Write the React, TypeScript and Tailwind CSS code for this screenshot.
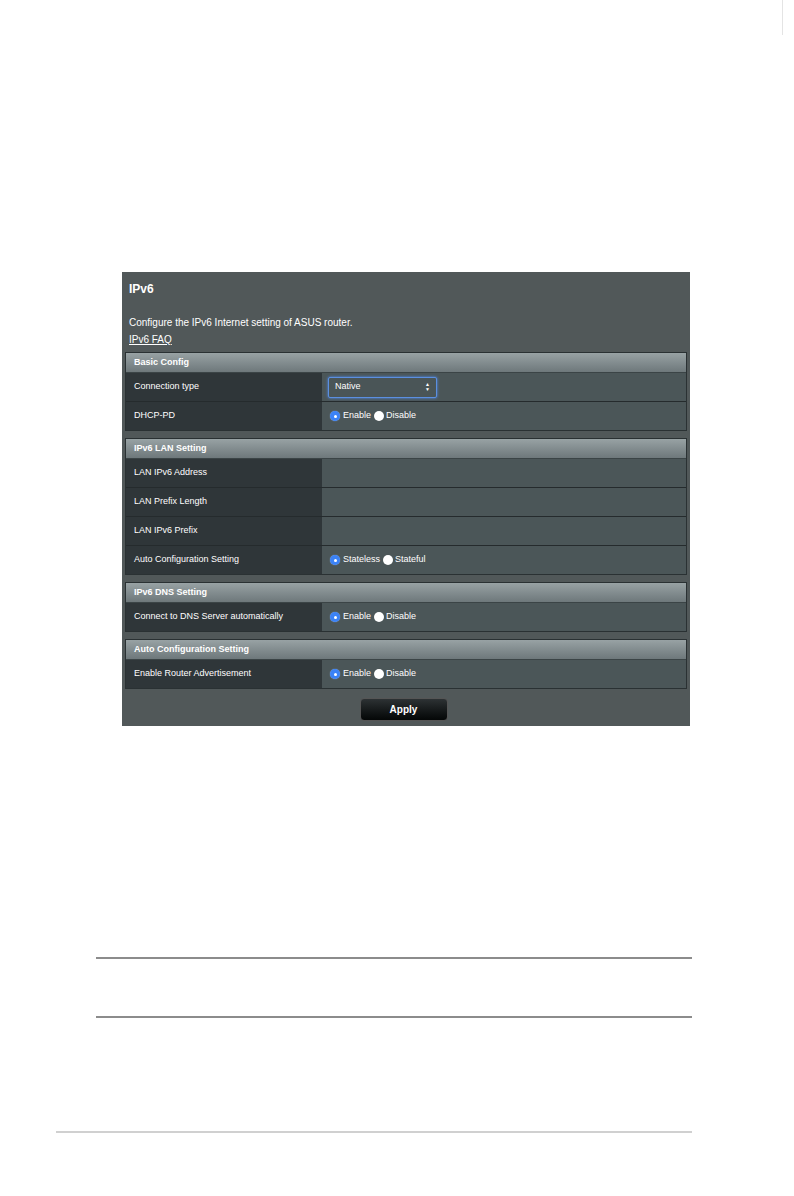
import React from "react";

type Row = { label: string; value?: React.ReactNode };

function Radio({ checked }: { checked: boolean }) {
  return checked ? (
    <span className="inline-flex h-[10px] w-[10px] items-center justify-center rounded-full bg-[#3b82f6] shadow-[0_0_1px_#9cc3ff]">
      <span className="h-[3px] w-[3px] rounded-full bg-white" />
    </span>
  ) : (
    <span className="inline-block h-[10px] w-[10px] rounded-full bg-white" />
  );
}

function RadioPair({ a, b }: { a: string; b: string }) {
  return (
    <div className="flex items-center">
      <Radio checked />
      <span className="ml-[3px] mr-[3px]">{a}</span>
      <Radio checked={false} />
      <span className="ml-[2px]">{b}</span>
    </div>
  );
}

function Section({ title, rows }: { title: string; rows: Row[] }) {
  return (
    <div className="mx-[3px] border border-[#2a3133]">
      <div className="flex h-[19px] items-center bg-gradient-to-b from-[#98a2a4] to-[#6e787b] pl-[8px] text-[9px] font-bold text-white">
        {title}
      </div>
      {rows.map((r, i) => (
        <div
          key={r.label}
          className={`flex h-[29px] ${i > 0 ? "border-t border-[#252b2d]" : "border-t border-[#3b4446]"}`}
        >
          <div className="flex w-[196px] items-center bg-[#2f3639] pl-[8px] text-[9px] text-white">
            {r.label}
          </div>
          <div className="flex flex-1 items-center bg-[#4b5658] pl-[8px] text-[9px] text-white">
            {r.value}
          </div>
        </div>
      ))}
    </div>
  );
}

export default function App() {
  return (
    <div className="relative h-[1196px] w-[794px] bg-white font-['Liberation_Sans',Arial,sans-serif]">
      <div className="absolute right-[11px] top-0 h-[35px] w-px bg-[#e4e4e4]" />

      <div className="pt-[272px] pl-[122px]">
        <div className="flex h-[454px] w-[568px] flex-col bg-[#515859] text-white">
          <div className="px-[7px] pt-[8px] text-[12px] font-bold">IPv6</div>
          <div className="px-[7px] pt-[17px] text-[10px]">
            Configure the IPv6 Internet setting of ASUS router.
          </div>
          <div className="px-[7px] pt-[2px] text-[10px] underline">IPv6 FAQ</div>

          <div className="mt-[5px] flex flex-col gap-[7px]">
            <Section
              title="Basic Config"
              rows={[
                {
                  label: "Connection type",
                  value: (
                    <div className="flex h-[21px] w-[109px] -ml-[2px] items-center justify-between rounded-[2px] border border-[#5b8fe0] bg-[#4a5557] px-[6px] shadow-[0_0_3px_#4d8df5]">
                      <span>Native</span>
                      <span className="flex flex-col text-[5px] leading-[5px]">
                        <span>▲</span>
                        <span>▼</span>
                      </span>
                    </div>
                  ),
                },
                { label: "DHCP-PD", value: <RadioPair a="Enable" b="Disable" /> },
              ]}
            />
            <Section
              title="IPv6 LAN Setting"
              rows={[
                { label: "LAN IPv6 Address" },
                { label: "LAN Prefix Length" },
                { label: "LAN IPv6 Prefix" },
                {
                  label: "Auto Configuration Setting",
                  value: <RadioPair a="Stateless" b="Stateful" />,
                },
              ]}
            />
            <Section
              title="IPv6 DNS Setting"
              rows={[
                {
                  label: "Connect to DNS Server automatically",
                  value: <RadioPair a="Enable" b="Disable" />,
                },
              ]}
            />
            <Section
              title="Auto Configuration Setting"
              rows={[
                {
                  label: "Enable Router Advertisement",
                  value: <RadioPair a="Enable" b="Disable" />,
                },
              ]}
            />
          </div>

          <div className="mt-[9px] flex justify-center pr-[5px]">
            <button className="h-[23px] w-[88px] rounded-[4px] border border-[#555] bg-gradient-to-b from-[#2d3234] to-[#050707] text-[10px] font-bold text-white">
              Apply
            </button>
          </div>
        </div>
      </div>

      <div className="mt-[231px] ml-[96px] h-[2px] w-[596px] bg-[#8c8c8c]" />
      <div className="mt-[57px] ml-[96px] h-[2px] w-[596px] bg-[#8c8c8c]" />
      <div className="mt-[113px] ml-[56px] h-[2px] w-[636px] bg-[#d0d0d0]" />
    </div>
  );
}
